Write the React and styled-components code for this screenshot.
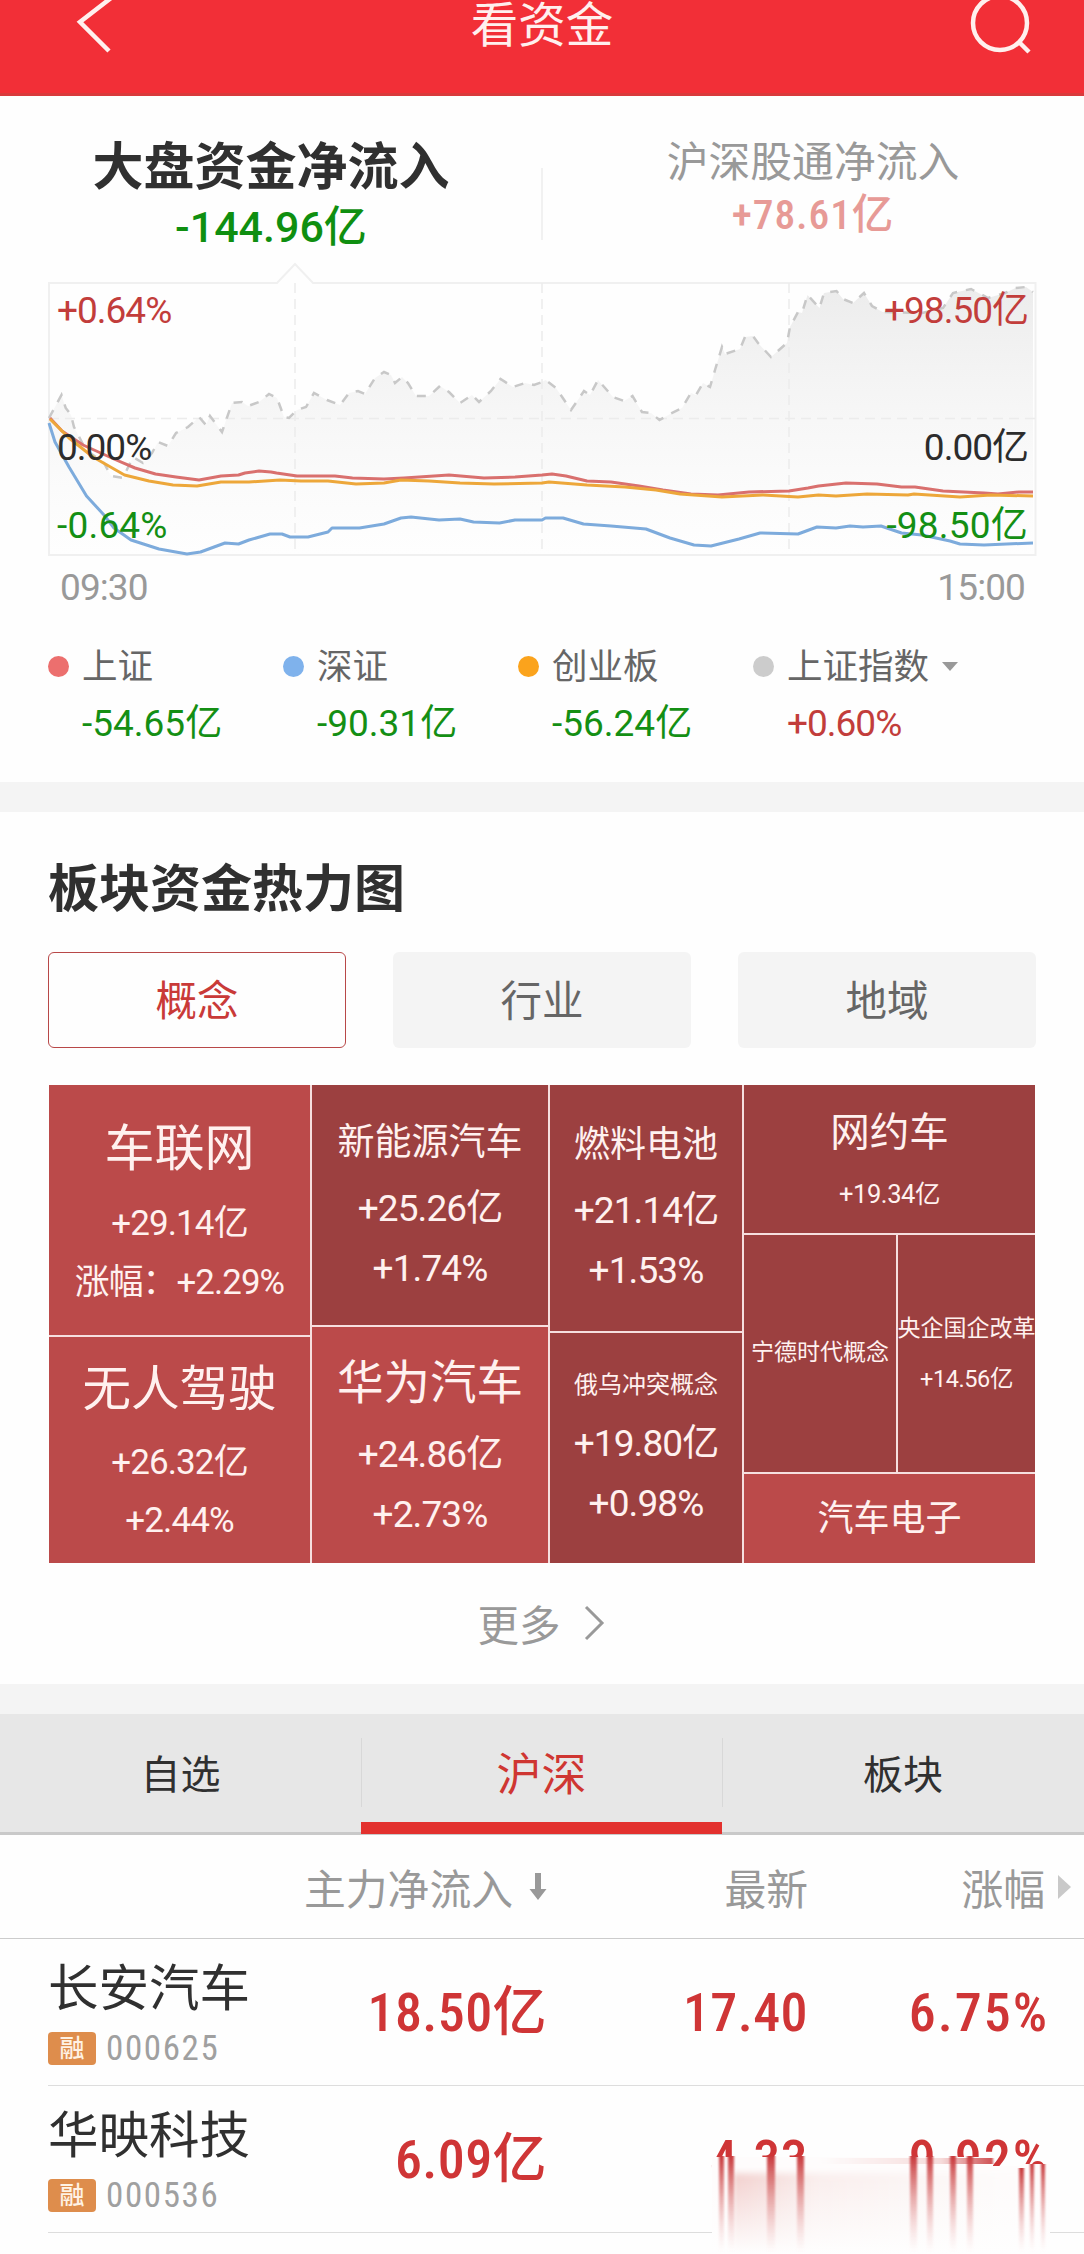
import styled, { createGlobalStyle } from "styled-components";

const GlobalStyle = createGlobalStyle`
  * {
    box-sizing: border-box;
  }

  body {
    margin: 0;
    background: #fefefe;
    color: #303030;
    font-family: Roboto, "Noto Sans CJK SC", sans-serif;
  }
`;

const Page = styled.div`
  position: relative;
  width: 1084px;
  height: 2254px;
  overflow: hidden;
`;

const TopBar = styled.header`
  display: grid;
  grid-template-columns: 64px 1fr 64px;
  height: 96px;
  padding: 0 50px 0 72px;
  background: #f22f37;
  border-bottom: 3px solid #d93a3c;
`;

const TopIcon = styled.svg`
  width: 64px;
  height: 60px;
  fill: none;
  stroke: #fff0ee;
  stroke-width: 4.5;
`;

const TopTitle = styled.h1`
  margin: 0 22px 0 0;
  text-align: center;
  font-size: 47.5px;
  font-weight: 400;
  line-height: 52px;
  color: #fff0ee;
`;

const FlowTabs = styled.div`
  display: grid;
  grid-template-columns: 542px 542px;
  height: 186px;
`;

const FlowTab = styled.div`
  display: flex;
  flex-direction: column;
  align-items: center;
  padding-top: ${props => props.$active ? 42 : 40}px;
  position: relative;

  &:last-child::before {
    content: "";
    position: absolute;
    left: -1px;
    top: 72px;
    height: 72px;
    border-left: 2px solid #f1f1f1;
  }
`;

const FlowName = styled.div`
  font-size: ${props => props.$active ? 51 : 41.8}px;
  font-weight: ${props => props.$active ? 700 : 400};
  line-height: ${props => props.$active ? 60 : 54}px;
  color: ${props => props.$active ? "#303030" : "#999"};
`;

const FlowValue = styled.div`
  font-size: ${props => props.$active ? 43 : 41.5}px;
  font-weight: 500;
  font-stretch: ${props => props.$active ? 88 : 75}%;
  line-height: ${props => props.$active ? 58 : 50}px;
  letter-spacing: ${props => props.$active ? 0 : 0.9}px;
  color: ${props => props.$active ? "#0f8f10" : "#e79a96"};
`;

const ChartBox = styled.div`
  position: relative;
  display: flex;
  align-items: flex-end;
  height: 276px;
`;

const ChartSvg = styled.svg`
  flex: none;
  width: 1084px;
  height: 298px;
`;

const ChartLabel = styled.span`
  position: absolute;
  top: ${props => props.$top}px;
  ${props => props.$right ? "right: 56px;" : "left: 57px;"}
  font-size: 37px;
  line-height: 42px;
  letter-spacing: ${props => props.$down ? 0.2 : -1}px;
  color: ${props => props.$color};
`;

const TimeAxis = styled.div`
  display: flex;
  justify-content: space-between;
  height: 82px;
  padding: 9px 59px 0 60px;
  font-size: 37px;
  line-height: 42px;
  letter-spacing: -0.9px;
  color: #999;
`;

const Legend = styled.div`
  display: flex;
  height: 142px;
  padding-left: 48px;
`;

const LegendItem = styled.div`
  width: 235px;
`;

const LegendName = styled.div`
  display: flex;
  align-items: center;
  gap: 13px;
  height: 53px;
  font-size: 35.5px;
  line-height: 50px;
  white-space: nowrap;
  color: #666;
`;

const Dot = styled.i`
  width: 21px;
  height: 21px;
  border-radius: 50%;
  background: ${props => props.$color};
`;

const Caret = styled.i`
  border: 8px solid transparent;
  border-top: 9px solid #999;
  border-bottom: 0;
`;

const LegendValue = styled.div`
  padding-left: 34px;
  font-size: 37px;
  line-height: 61px;
  letter-spacing: ${props => props.$up ? -1 : 0}px;
  color: ${props => props.$up ? "#c23d3b" : "#148f14"};
`;

const Divider = styled.div`
  height: 30px;
  background: #f4f4f4;
`;

const HeatSection = styled.section`
  height: 872px;
  padding: 48px 48px 0;
`;

const SectionTitle = styled.h2`
  margin: 0;
  font-size: 51px;
  font-weight: 700;
  line-height: 60px;
`;

const Switch = styled.div`
  display: grid;
  grid-template-columns: repeat(3, 298px);
  justify-content: space-between;
  margin-top: 32px;
`;

const SwitchButton = styled.button`
  height: 96px;
  padding: 0 0 4px;
  border: ${props => props.$active ? "1.5px solid #b84848" : "0"};
  border-radius: 6px;
  background: ${props => props.$active ? "#fefefe" : "#f4f4f4"};
  font: inherit;
  font-size: 41.5px;
  color: ${props => props.$active ? "#c93a38" : "#666"};
`;

const HeatMap = styled.div`
  display: grid;
  grid-template-columns: 261px 236px 192px 291px;
  gap: 2px;
  width: 986px;
  height: 478px;
  margin: 37px 0 0 1px;
  background: #f6dfdf;
`;

const HeatColumn = styled.div`
  display: grid;
  grid-template-rows: ${props => props.$rows};
  gap: 2px;
`;

const HeatPair = styled.div`
  display: grid;
  grid-template-columns: 152px 137px;
  gap: 2px;
`;

const Tile = styled.div`
  display: flex;
  flex-direction: column;
  align-items: center;
  white-space: nowrap;
  color: #fff1ef;
  background: ${props => props.$bright ? "#bb4a4a" : "#9c4040"};
`;

const TileLine = styled.div`
  margin-top: ${props => props.$gap}px;
  font-size: ${props => props.$size}px;
  line-height: ${props => props.$size}px;
`;

const TileFigure = styled(TileLine)`
  letter-spacing: ${props => props.$small ? -0.4 : -0.9}px;
`;

const More = styled.div`
  display: flex;
  justify-content: center;
  align-items: center;
  gap: 22px;
  height: 119px;
  font-size: 41.5px;
  color: #999;

  svg {
    width: 24px;
    height: 36px;
    fill: none;
    stroke: #999;
    stroke-width: 3;
  }
`;

const MarketTabs = styled.nav`
  display: grid;
  grid-template-columns: 361px 361px 362px;
  grid-template-rows: 118px;
  height: 121px;
  background: #e7e7e7;
  border-bottom: 3px solid #c9c9c9;
`;

const MarketTab = styled.div`
  position: relative;
  text-align: center;
  font-size: ${props => props.$active ? 45 : 40}px;
  line-height: 124px;
  color: ${props => props.$active ? "#cf3632" : "#303030"};

  &:not(:first-child)::before {
    content: "";
    position: absolute;
    left: 0;
    top: 24px;
    height: 69px;
    border-left: 1px solid #d8d8d8;
  }

  &::after {
    content: "";
    display: ${props => props.$active ? "block" : "none"};
    position: absolute;
    left: 0;
    right: 0;
    bottom: -2px;
    height: 12px;
    background: #e3312e;
  }
`;

const TableHead = styled.div`
  display: grid;
  grid-template-columns: 547px 261px 263px;
  height: 104px;
  border-bottom: 1.5px solid #ccc;
  font-size: 41.8px;
  color: #999;
`;

const HeadCell = styled.div`
  display: flex;
  justify-content: flex-end;
  align-items: center;
  gap: ${props => props.$gap || 0}px;

  svg {
    display: block;
  }
`;

const StockRow = styled.div`
  display: grid;
  grid-template-columns: 499px 261px 239px;
  height: 147px;
  margin-left: 48px;
  border-bottom: 1.5px solid #ddd;
`;

const StockInfo = styled.div`
  display: grid;
  grid-template-columns: 230px 1fr;
`;

const StockName = styled.div`
  padding-top: 20px;
  font-size: 50.5px;
  line-height: 60px;
`;

const StockMeta = styled.div`
  display: flex;
  align-items: center;
  gap: 10px;
  height: 33px;
  margin-top: 13px;
  font-size: 35px;
  font-stretch: 75%;
  letter-spacing: 1.6px;
  color: #a0a0a0;
`;

const Tag = styled.span`
  width: 48px;
  height: 33px;
  border-radius: 4px;
  font-size: 25px;
  font-weight: 500;
  line-height: 34px;
  letter-spacing: 0;
  text-align: center;
  color: #fff2e4;
  background: #de8d4c;
`;

const StockValue = styled.div`
  margin-right: ${props => props.$wide ? -2 : 0}px;
  text-align: right;
  white-space: nowrap;
  font-size: 54px;
  font-weight: 500;
  font-stretch: 75%;
  line-height: 148px;
  letter-spacing: ${props => props.$wide ? 2 : 0.4}px;
  color: #cf3536;
`;

const Smear = styled.svg`
  position: absolute;
  left: 700px;
  top: 2140px;
  width: 384px;
  height: 114px;
`;

const indexLine = "49,418 61.5,395 65.7,408 71,415 74,427 86,450 104,463 111,476 123,478 133,457 143,463 152,453 158,442 168,446 176,433 188,427 199,417 206,425 210,416 222,432 232,403 242,402 248,406 259,402 269,394 277,398 284,417 289,418 297,410 306,407 314,393 327,400 340,405 349,393 358,391 365,394 375,378 384,372 391,375 395,383 402,377 408,383 416,396 429,396 440,386 449,392 460,403 472,395 479,402 491,391 500.5,379 513,387 525,383 534,385 542,382 545.5,380 556,388 571,410 584,391 590,395 598,380 613,397 624,401 632.5,396 642,412 651,413 659.5,420 670,414 682,408 691,393 696,395 703,383 710,387 715,370 722,347 725,354 740,349 745,337 753,336 758,343 771,357 787,343 790,327 798,312 802,313 807.5,295 819.5,308 824,293 836.5,291 843,299 853,303 864,293 872,306 882.5,312 922,313 943,308 953,293 971,289 988,298 1005,293 1015.5,288 1026,287 1033,292";

const shLine = "50,418 62,431 83,445 114,459 135,468 155.5,474 176,477 199,480 221,476 238.5,475 245,473 259,471 271,472 276.5,473 297,476 335,476 352.5,478 384,479 404,478 449,475 484,478 515,477 542,475 552,474 566,476 587,481 611,482 639,486 663,490 691,494 718,495 749,492 789,491 808,488 818.5,486 846,483 877,484 901.5,487 915,487 943,491 984,493 998,494 1019,492 1033,492";

const cyLine = "50,419 69,438 93,457 124.5,475 149,481 173,485 197,486 221,482 249,482 280,480 301,481 328,481 356,484 384,483 401,480 429,481 460,483 494,484 542,483 549,482 587,485 625,487 656,490 680,494 722,497 763,495 798,497 818.5,495 836,496 867,494 908,495 914,494 960,497 991,495 1033,496";

const szLine = "49,423 55,442 69,467 86.5,496 104,515 114,528 131,540 159,549 187,554 200.5,552 225,543 238.5,544 249,540 270,534 282,534 290,537 308,537 328,532 332,528 359.5,528 384,524 401,518 411,517 439,520 460,519 473.5,522 499.5,523 515,520 542,520 545.5,518 563,518 583.5,524 611,526 646,529 670,538 694,545 711,546 739,539 760,533 798,534 817,527 836,528 850,526 863,527 881,526 901.5,533 922,535 950,541 960,544 984,545 1033,543";

const legend = [
  { name: "上证", value: "-54.65亿", color: "#ec6f6e" },
  { name: "深证", value: "-90.31亿", color: "#7fb2ec" },
  { name: "创业板", value: "-56.24亿", color: "#fba31c" },
  { name: "上证指数", value: "+0.60%", color: "#ccc", up: true, caret: true }
];

const stocks = [
  { name: "长安汽车", code: "000625", flow: "18.50亿", price: "17.40", change: "6.75%" },
  { name: "华映科技", code: "000536", flow: "6.09亿", price: "4.33", change: "9.92%" }
];

// x, top, width of every red trail under the last row
const trails = [
  [19, 16, 5], [28, 16, 6], [67, 16, 8], [97, 16, 7],
  [210, 16, 7], [227, 16, 6], [250, 16, 6], [267, 16, 6],
  [319, 28, 5], [330, 24, 4], [341, 24, 4]
];

function Chart() {
  return (
    <ChartBox>
      <ChartSvg viewBox="0 260 1084 298">
        <defs>
          <linearGradient id="area" x1="0" y1="0" x2="0" y2="1">
            <stop offset="0" stopColor="#ececec" />
            <stop offset="1" stopColor="#f4f4f4" stopOpacity="0" />
          </linearGradient>
        </defs>
        <polygon points={`${indexLine} 1033,555 49,555`} fill="url(#area)" />
        <path d="M49 555V283H277L295 264L313 283H1035.500V555Z" fill="none" stroke="#f0f0f0" strokeWidth="2" />
        <path d="M295 283V555M542 283V555M789 283V555M49 418.500H1035" fill="none" stroke="#ececec" strokeWidth="1.500" strokeDasharray="10 6" />
        <polyline points={indexLine} fill="none" stroke="#c8c8c8" strokeWidth="2.500" strokeDasharray="9 9" />
        <g fill="none" strokeWidth="3" strokeLinejoin="round">
          <polyline points={szLine} stroke="#7dabdc" />
          <polyline points={shLine} stroke="#d9706e" />
          <polyline points={cyLine} stroke="#eda73a" />
        </g>
      </ChartSvg>
      <ChartLabel $top={8} $color="#c23d3b">+0.64%</ChartLabel>
      <ChartLabel $top={145} $color="#2c2c2c">0.00%</ChartLabel>
      <ChartLabel $down $top={223} $color="#148f14">-0.64%</ChartLabel>
      <ChartLabel $right $top={8} $color="#c23d3b">+98.50亿</ChartLabel>
      <ChartLabel $right $top={145} $color="#2c2c2c">0.00亿</ChartLabel>
      <ChartLabel $right $down $top={223} $color="#148f14">-98.50亿</ChartLabel>
    </ChartBox>
  );
}

function Heat() {
  return (
    <HeatMap>
      <HeatColumn $rows="250px 226px">
        <Tile $bright>
          <TileLine $gap={39} $size={50}>车联网</TileLine>
          <TileFigure $gap={32} $size={35}>+29.14亿</TileFigure>
          <TileFigure $gap={24} $size={34.8}>涨幅：+2.29%</TileFigure>
        </Tile>
        <Tile $bright>
          <TileLine $gap={29} $size={48.5}>无人驾驶</TileLine>
          <TileFigure $gap={30} $size={35}>+26.32亿</TileFigure>
          <TileFigure $gap={23} $size={35}>+2.44%</TileFigure>
        </Tile>
      </HeatColumn>
      <HeatColumn $rows="240px 236px">
        <Tile>
          <TileLine $gap={39} $size={37}>新能源汽车</TileLine>
          <TileFigure $gap={29} $size={37}>+25.26亿</TileFigure>
          <TileFigure $gap={23} $size={37}>+1.74%</TileFigure>
        </Tile>
        <Tile $bright>
          <TileLine $gap={33} $size={46.5}>华为汽车</TileLine>
          <TileFigure $gap={29} $size={37}>+24.86亿</TileFigure>
          <TileFigure $gap={23} $size={37}>+2.73%</TileFigure>
        </Tile>
      </HeatColumn>
      <HeatColumn $rows="246px 230px">
        <Tile>
          <TileLine $gap={42} $size={36}>燃料电池</TileLine>
          <TileFigure $gap={29} $size={37}>+21.14亿</TileFigure>
          <TileFigure $gap={23} $size={37}>+1.53%</TileFigure>
        </Tile>
        <Tile>
          <TileLine $gap={40} $size={24}>俄乌冲突概念</TileLine>
          <TileFigure $gap={28} $size={37}>+19.80亿</TileFigure>
          <TileFigure $gap={23} $size={37}>+0.98%</TileFigure>
        </Tile>
      </HeatColumn>
      <HeatColumn $rows="148px 237px 89px">
        <Tile>
          <TileLine $gap={28} $size={39.5}>网约车</TileLine>
          <TileFigure $small $gap={29} $size={25.5}>+19.34亿</TileFigure>
        </Tile>
        <HeatPair>
          <Tile>
            <TileLine $gap={106} $size={23}>宁德时代概念</TileLine>
          </Tile>
          <Tile>
            <TileLine $gap={82} $size={23}>央企国企改革</TileLine>
            <TileFigure $small $gap={28} $size={23.5}>+14.56亿</TileFigure>
          </Tile>
        </HeatPair>
        <Tile $bright>
          <TileLine $gap={27} $size={36}>汽车电子</TileLine>
        </Tile>
      </HeatColumn>
    </HeatMap>
  );
}

function App() {
  return (
    <Page>
      <GlobalStyle />
      <TopBar>
        <TopIcon viewBox="0 0 64 60"><path d="M39 -2L8 22L37 51" /></TopIcon>
        <TopTitle>看资金</TopTitle>
        <TopIcon viewBox="0 0 64 60">
          <circle cx="30" cy="23" r="27" />
          <path d="M49 42L59 52" />
        </TopIcon>
      </TopBar>
      <FlowTabs>
        <FlowTab $active>
          <FlowName $active>大盘资金净流入</FlowName>
          <FlowValue $active>-144.96亿</FlowValue>
        </FlowTab>
        <FlowTab>
          <FlowName>沪深股通净流入</FlowName>
          <FlowValue>+78.61亿</FlowValue>
        </FlowTab>
      </FlowTabs>
      <Chart />
      <TimeAxis>
        <span>09:30</span>
        <span>15:00</span>
      </TimeAxis>
      <Legend>
        {legend.map(item => (
          <LegendItem key={item.name}>
            <LegendName>
              <Dot $color={item.color} />
              {item.name}
              {item.caret && <Caret />}
            </LegendName>
            <LegendValue $up={item.up}>{item.value}</LegendValue>
          </LegendItem>
        ))}
      </Legend>
      <Divider />
      <HeatSection>
        <SectionTitle>板块资金热力图</SectionTitle>
        <Switch>
          <SwitchButton $active>概念</SwitchButton>
          <SwitchButton>行业</SwitchButton>
          <SwitchButton>地域</SwitchButton>
        </Switch>
        <Heat />
        <More>
          更多
          <svg viewBox="0 0 24 36"><path d="M3 2L19 18L3 34" /></svg>
        </More>
      </HeatSection>
      <Divider />
      <MarketTabs>
        <MarketTab>自选</MarketTab>
        <MarketTab $active>沪深</MarketTab>
        <MarketTab>板块</MarketTab>
      </MarketTabs>
      <TableHead>
        <HeadCell $gap={16}>
          主力净流入
          <svg width="18" height="28" viewBox="0 0 18 28" fill="#999"><path d="M6 0H12V16H17.500L9 27L0.500 16H6Z" /></svg>
        </HeadCell>
        <HeadCell>最新</HeadCell>
        <HeadCell $gap={13}>
          涨幅
          <svg width="13" height="24" viewBox="0 0 13 24" fill="#c9c9c9"><path d="M0 0L13 12L0 24Z" /></svg>
        </HeadCell>
      </TableHead>
      {stocks.map(stock => (
        <StockRow key={stock.code}>
          <StockInfo>
            <div>
              <StockName>{stock.name}</StockName>
              <StockMeta><Tag>融</Tag>{stock.code}</StockMeta>
            </div>
            <StockValue>{stock.flow}</StockValue>
          </StockInfo>
          <StockValue>{stock.price}</StockValue>
          <StockValue $wide>{stock.change}</StockValue>
        </StockRow>
      ))}
      <Smear viewBox="0 0 384 114">
        <defs>
          <linearGradient id="trail" x1="0" y1="0" x2="0" y2="1">
            <stop offset="0" stopColor="#c93a3c" />
            <stop offset="0.35" stopColor="#dc8080" stopOpacity="0.8" />
            <stop offset="1" stopColor="#f3c4c4" stopOpacity="0" />
          </linearGradient>
          <linearGradient id="haze" x1="0" y1="0" x2="1" y2="0">
            <stop offset="0" stopColor="#f3d3d1" />
            <stop offset="0.3" stopColor="#faefee" />
            <stop offset="1" stopColor="#fefcfc" />
          </linearGradient>
          <linearGradient id="streak" x1="0" y1="0" x2="1" y2="0">
            <stop offset="0" stopColor="#fefcfc" />
            <stop offset="0.7" stopColor="#f6dcdb" />
            <stop offset="1" stopColor="#cf5052" />
          </linearGradient>
          <linearGradient id="fade" x1="0" y1="0" x2="0" y2="1">
            <stop offset="0" stopColor="#fefefe" stopOpacity="0" />
            <stop offset="1" stopColor="#fefefe" />
          </linearGradient>
          <filter id="soft" x="-100%" width="300%"><feGaussianBlur stdDeviation="1.2 0.3" /></filter>
          <filter id="blur"><feGaussianBlur stdDeviation="2 3" /></filter>
        </defs>
        <path d="M12 17H293V26H319L322 24L350 24V114H12Z" fill="#fefcfc" />
        <rect x="34" y="33" width="285" height="90" fill="url(#haze)" filter="url(#blur)" />
        <rect x="120" y="18" width="173" height="6" fill="url(#streak)" filter="url(#soft)" />
        <rect x="12" y="40" width="338" height="74" fill="url(#fade)" />
        {trails.map(([x, y, w]) => (
          <rect key={x} x={x} y={y} width={w} height={112 - y} fill="url(#trail)" filter="url(#soft)" />
        ))}
      </Smear>
    </Page>
  );
}

export default App;
